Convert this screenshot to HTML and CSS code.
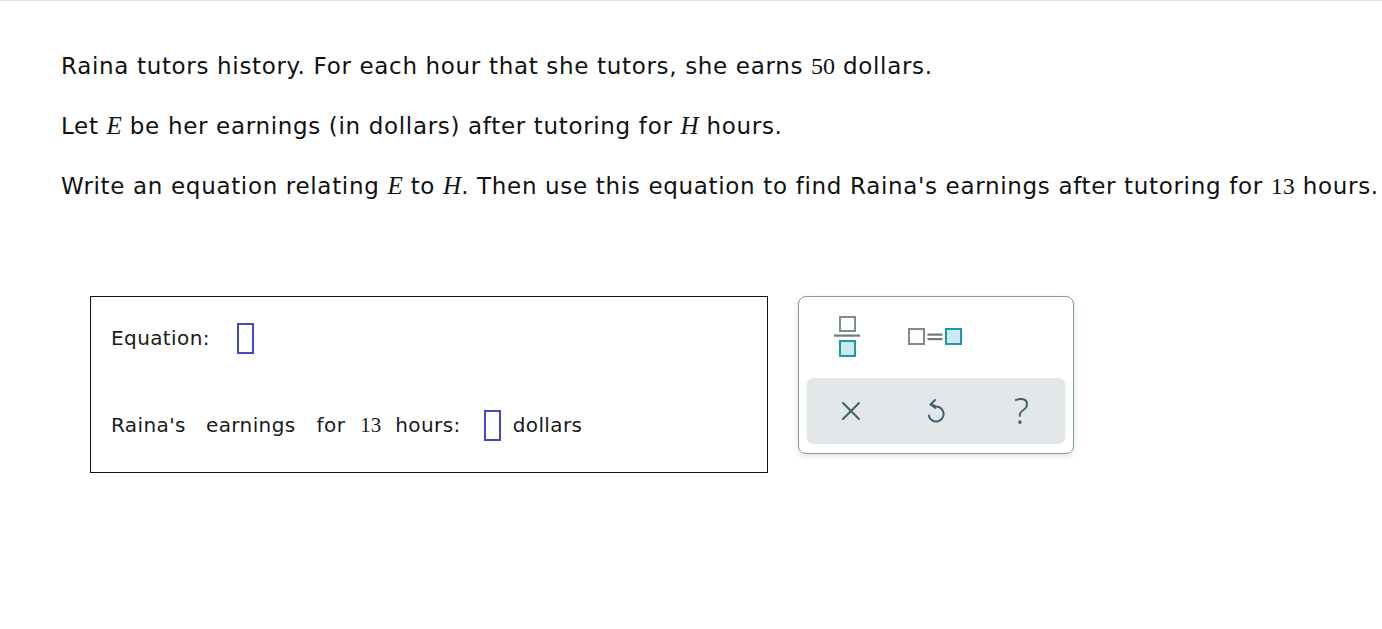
FILE: index.html
```html
<!DOCTYPE html>
<html>
<head>
<meta charset="utf-8">
<link rel="stylesheet" href="styles.css">
</head>
<body>
<div class="topline"></div>
<div class="question">
  <p class="q">Raina tutors history. For each hour that she tutors, she earns <span class="num">50</span> dollars.</p>
  <p class="q">Let <span class="var">E</span> be her earnings (in dollars) after tutoring for <span class="var">H</span> hours.</p>
  <p class="q">Write an equation relating <span class="var">E</span> to <span class="var">H</span>. Then use this equation to find Raina's earnings after tutoring for <span class="num">13</span> hours.</p>
</div>
<div class="answer-area">
  <div class="answer-box">
    <div class="row row-eq">
      <span class="label">Equation:</span>
      <span class="blank"></span>
    </div>
    <div class="row row-earn">
      <span class="label w1">Raina's</span>
      <span class="label w2">earnings</span>
      <span class="label w3">for</span>
      <span class="num13">13</span>
      <span class="label w5">hours:</span>
      <span class="blank b2"></span>
      <span class="label">dollars</span>
    </div>
  </div>
  <div class="keypad">
    <div class="keys">
      <button class="key key-frac" aria-label="fraction">
        <svg width="28" height="42" viewBox="0 0 28 42">
          <rect x="7" y="1" width="15" height="14" fill="#fff" stroke="#7f8c8d" stroke-width="2"/>
          <rect x="1" y="18.5" width="26" height="2.2" fill="#6d7b7f"/>
          <rect x="7" y="25" width="15" height="15" fill="#cde8f0" stroke="#1f9aa5" stroke-width="2"/>
        </svg>
      </button>
      <button class="key key-eq" aria-label="equation">
        <svg width="56" height="18" viewBox="0 0 56 18">
          <rect x="1" y="1" width="15" height="15" fill="#fff" stroke="#7f8c8d" stroke-width="2"/>
          <rect x="19.5" y="5.5" width="15" height="2.2" fill="#6d7b7f"/>
          <rect x="19.5" y="10" width="15" height="2.2" fill="#6d7b7f"/>
          <rect x="38" y="1" width="15" height="15" fill="#cde8f0" stroke="#1f9aa5" stroke-width="2"/>
        </svg>
      </button>
    </div>
    <div class="actions">
      <button class="act" aria-label="clear">
        <svg width="20" height="20" viewBox="0 0 20 20"><path d="M2 2 L18 18 M18 2 L2 18" stroke="#3f5f6b" stroke-width="2" fill="none" stroke-linecap="round"/></svg>
      </button>
      <button class="act" aria-label="undo">
        <svg width="18" height="26" viewBox="0 0 18 26"><path d="M8 2 L3.5 6.5 L8.5 10" stroke="#3f5f6b" stroke-width="2" fill="none" stroke-linecap="round" stroke-linejoin="round"/><path d="M4 6.5 L9 8.5 A7.5 7.5 0 1 1 1.8 17.5" stroke="#3f5f6b" stroke-width="2" fill="none" stroke-linecap="round"/></svg>
      </button>
      <button class="act help" aria-label="help">?</button>
    </div>
  </div>
</div>
</body>
</html>
```

FILE: styles.css
```css
html, body {
  margin: 0;
  padding: 0;
  background: #fff;
}
body {
  font-family: "DejaVu Sans", Verdana, sans-serif;
  color: #111;
}
.topline {
  height: 1px;
  background: #d6e3ef;
}
.question {
  padding: 53px 0 0 61px;
}
.q {
  margin: 0 0 36px 0;
  height: 24px;
  font-size: 23px;
  line-height: 24px;
  letter-spacing: 0.67px;
  white-space: nowrap;
}
.var {
  font-family: "Liberation Serif", "Times New Roman", serif;
  font-style: italic;
  font-size: 25px;
  line-height: 24px;
  letter-spacing: 0;
}
.num {
  font-family: "Liberation Serif", "Times New Roman", serif;
  font-size: 24px;
  line-height: 24px;
  letter-spacing: 0;
}
.answer-area {
  display: flex;
  align-items: flex-start;
  gap: 30px;
  margin: 98px 0 0 90px;
}
.answer-box {
  box-sizing: border-box;
  width: 678px;
  height: 177px;
  border: 1px solid #111;
  padding: 25px 0 0 20px;
}
.row {
  display: flex;
  align-items: center;
}
.row-eq {
  height: 32px;
  gap: 27px;
}
.row-earn {
  margin-top: 55px;
  height: 32px;
}
.label {
  font-size: 20px;
  letter-spacing: 0.4px;
  color: #1a1a1a;
  white-space: nowrap;
}
.w1 { margin-right: 20px; }
.w2 { margin-right: 21px; }
.w3 { margin-right: 15px; }
.num13 {
  font-family: "Liberation Serif", "Times New Roman", serif;
  font-size: 21px;
  color: #1a1a1a;
  margin-right: 14px;
}
.w5 { margin-right: 23px; }
.b2 { margin-right: 12px; }
.blank {
  display: inline-block;
  flex: none;
  box-sizing: border-box;
  width: 17px;
  height: 31px;
  border: 2px solid #4646cc;
}
.keypad {
  box-sizing: border-box;
  width: 276px;
  height: 158px;
  border: 1px solid #7d9aa6;
  border-radius: 8px;
  box-shadow: 0 2px 6px rgba(0, 0, 0, 0.12);
  padding: 19px 8px 9px 8px;
  display: flex;
  flex-direction: column;
  justify-content: space-between;
}
.keys {
  display: flex;
  align-items: center;
  height: 42px;
}
button {
  border: none;
  background: transparent;
  padding: 0;
  margin: 0;
  cursor: pointer;
  display: flex;
  align-items: center;
  justify-content: center;
}
.key-frac {
  width: 28px;
  height: 42px;
  margin-left: 26px;
}
.key-eq {
  width: 56px;
  height: 18px;
  margin-left: 47px;
}
.actions {
  height: 66px;
  background: #e2e8ea;
  border-radius: 6px;
  display: flex;
  align-items: center;
  justify-content: space-around;
  padding: 0 1px;
}
.act {
  width: 40px;
  height: 40px;
}
.help {
  font-family: "Noto Sans", "DejaVu Sans", sans-serif;
  font-size: 36px;
  font-weight: 300;
  color: #3f5f6b;
  line-height: 1;
}
```
